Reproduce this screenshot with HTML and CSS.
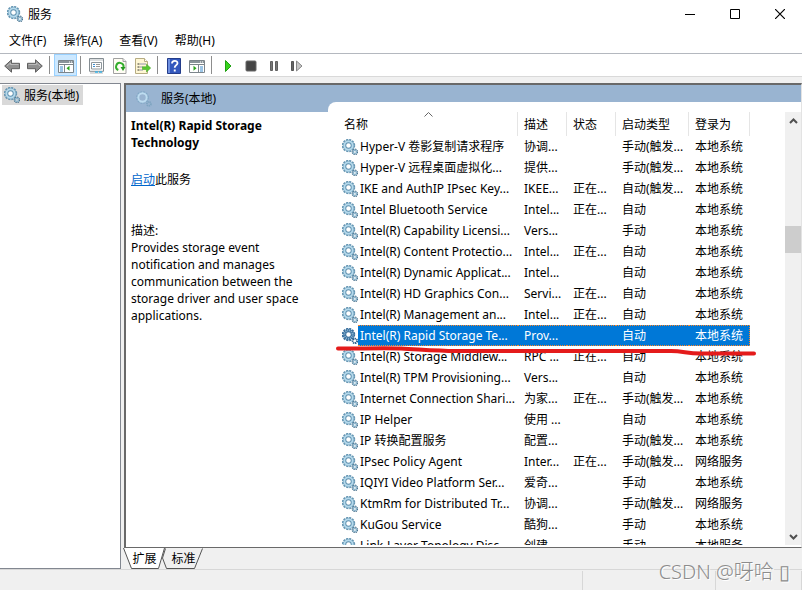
FILE: index.html
```
<!DOCTYPE html>
<html lang="zh-CN">
<head>
    <meta charset="UTF-8">
    <meta name="viewport" content="width=device-width, initial-scale=1.0">
    <title>服务</title>
    <link rel="stylesheet" href="styles.css">
</head>
<body>
    <svg class="defs" width="0" height="0" aria-hidden="true">
        <symbol id="gears" viewBox="0 0 16 16">
            <circle cx="6.5" cy="6.5" r="5.7" fill="none" stroke="#6797b4" stroke-width="2" stroke-dasharray="2 .98"/>
            <circle cx="6.5" cy="6.5" r="4" fill="#fff" stroke="#5f90ae" stroke-width="3.4"/>
            <circle cx="6.5" cy="6.5" r="4.2" fill="none" stroke="#b4d9ec" stroke-width="2"/>
            <circle cx="12.9" cy="12.9" r="2.500" fill="none" stroke="#476f8b" stroke-width="1.6" stroke-dasharray="1.2 .76"/>
            <circle cx="12.9" cy="12.9" r="1.6" fill="none" stroke="#8cb5cc" stroke-width="1.5"/>
        </symbol>
        <symbol id="gears-header" viewBox="0 0 16 16">
            <circle cx="6.500" cy="6.500" r="5.5" fill="none" stroke="#7fa6c4" stroke-width="1.6" stroke-dasharray="1.8 1.080"/>
            <circle cx="6.500" cy="6.500" r="4.2" fill="none" stroke="#bddcf0" stroke-width="2"/>
            <circle cx="12.900" cy="12.900" r="2" fill="none" stroke="#7da4c0" stroke-width="1.8" stroke-dasharray="1.2 .6"/>
        </symbol>
        <symbol id="gears-selected" viewBox="0 0 16 16">
            <circle cx="6.5" cy="6.5" r="5.7" fill="none" stroke="#3a6f9c" stroke-width="2" stroke-dasharray="2 .98"/>
            <circle cx="6.5" cy="6.5" r="4" fill="#fff" stroke="#3a6f9c" stroke-width="3.4"/>
            <circle cx="6.5" cy="6.5" r="4.2" fill="none" stroke="#8bb7d6" stroke-width="2" stroke-dasharray="1 1"/>
            <circle cx="12.9" cy="12.9" r="2.2" fill="none" stroke="#285f8e" stroke-width="2" stroke-dasharray="1.2 .6"/>
        </symbol>
    </svg>

    <div class="window">
        <header class="titlebar">
            <svg class="icon"><use href="#gears"/></svg>
            <h1>服务</h1>
            <div class="window-buttons">
                <button aria-label="最小化"><svg width="10" height="10"><path d="M0 5.5h10" stroke="#000"/></svg></button>
                <button aria-label="最大化"><svg width="10" height="10"><path d="M.5 .5h9v9h-9z" fill="none" stroke="#000"/></svg></button>
                <button aria-label="关闭"><svg width="10" height="10"><path d="M0 0l10 10M10 0L0 10" stroke="#000" stroke-width="1.2"/></svg></button>
            </div>
        </header>

        <nav class="menubar">
            <button>文件(F)</button>
            <button>操作(A)</button>
            <button>查看(V)</button>
            <button>帮助(H)</button>
        </nav>

        <div class="toolbar">
            <button aria-label="后退"><svg class="icon" viewBox="0 0 16 16"><path d="M.7 8L7.5 1.8v3.5h8v5.4h-8v3.5z" fill="#909090" stroke="#5f5f5f"/><path d="M3 8l3.5-3v1.5h8" fill="none" stroke="#bbb"/></svg></button>
            <button aria-label="前进"><svg class="icon" viewBox="0 0 16 16"><path d="M15.3 8L8.5 1.8v3.5h-8v5.4h8v3.5z" fill="#909090" stroke="#5f5f5f"/><path d="M1.5 6.5h8V5L13 8" fill="none" stroke="#bbb"/></svg></button>
            <span class="separator"></span>
            <button class="pressed" aria-label="显示/隐藏控制台树"><svg class="icon" viewBox="0 0 16 16"><path d="M.5 2.5h15v12H.5z" fill="#fff" stroke="#7c858b"/><path d="M1 3h14v2H1z" fill="#8a949a"/><path d="M1 6.5h14M6.5 7v7" stroke="#7c858b"/><path d="M11 4h1M13 4h1" stroke="#fff"/><path d="M2 9h3M2 11h3M2 13h3" stroke="#3d8ed0"/><path d="M11.5 7.8v5l-3-2.5z" fill="#2ba31c"/></svg></button>
            <span class="separator"></span>
            <button aria-label="属性"><svg class="icon" viewBox="0 0 16 16"><path d="M.5 .5h14v12.8H.5z" fill="#fff" stroke="#858d92"/><path d="M1 2h13" stroke="#b7bdc1"/><path d="M2.5 4.5h10v6.5h-10z" fill="#fff" stroke="#8e979c"/><path d="M4 6.5h2M4 8.5h2" stroke="#3d8ed0"/><path d="M7 6.5h4M7 8.5h4" stroke="#999"/><path d="M1 14h13v2H1z" fill="#dcdcdc"/><path d="M6 14h3M10 14h3" stroke="#3ab4e6" stroke-width="1.5"/></svg></button>
            <button aria-label="刷新"><svg class="icon" viewBox="0 0 16 16"><path d="M1.5 .5h9.5l3 3v12H1.5z" fill="#fffdf4" stroke="#a1a1a1"/><path d="M11 .5v3h3" fill="#eee" stroke="#a1a1a1"/><path d="M6.3 12A3.7 3.7 0 1 1 11.4 9.5" fill="none" stroke="#34ad2d" stroke-width="2"/><path d="M8.5 9h5L11 13z" fill="#249b20"/></svg></button>
            <button aria-label="导出列表"><svg class="icon" viewBox="0 0 16 16"><path d="M.5 .5h9l3 3v12H.5z" fill="#fff7d4" stroke="#b6ac83"/><path d="M9.5 .5v3h3" fill="#fff" stroke="#b6ac83"/><path d="M2.5 6h2M2.5 9h2M2.5 12h2" stroke="#333"/><path d="M5 6h6M5 9h3M5 12h3" stroke="#9294b0"/><path d="M7.5 8.8h4V6.2L15.7 10l-4.2 4v-2.5h-4z" fill="#58c930" stroke="#46a52a" stroke-width=".6"/></svg></button>
            <span class="separator"></span>
            <button aria-label="帮助"><svg class="icon" viewBox="0 0 16 16"><path d="M1.5 .5h13v15h-13z" fill="#3358bd" stroke="#233c8a"/><path d="M2 1h2v14H2z" fill="#6e8fe0"/><path d="M6 5.5C6 2 11.5 2 11.5 5.2c0 2-2.8 2-2.8 4.6" fill="none" stroke="#fff" stroke-width="1.8"/><path d="M7.8 11.5h1.9v2H7.8z" fill="#fff"/></svg></button>
            <button aria-label="显示/隐藏操作窗格"><svg class="icon" viewBox="0 0 16 16"><path d="M.5 2.5h15v12H.5z" fill="#fff" stroke="#7c858b"/><path d="M1 3h14v2H1z" fill="#8a949a"/><path d="M1 6.5h14M9.5 7v7" stroke="#7c858b"/><path d="M11 4h1M13 4h1" stroke="#fff"/><path d="M11 9h3M11 11h3M11 13h3" stroke="#3d8ed0"/><path d="M4.5 7.8v5l3-2.5z" fill="#2ba31c"/></svg></button>
            <span class="separator"></span>
            <button aria-label="启动服务"><svg class="icon" viewBox="0 0 16 16"><path d="M5.5 2.5v11l5.5-5.5z" fill="#38d31e" stroke="#20a112"/></svg></button>
            <button aria-label="停止服务"><svg class="icon" viewBox="0 0 16 16"><rect x="3" y="3" width="10" height="10" rx="1" fill="#454545" stroke="#686868"/></svg></button>
            <button aria-label="暂停服务"><svg class="icon" viewBox="0 0 16 16"><path d="M4.5 3.5h2v9h-2zM9.5 3.5h2v9h-2z" fill="#777" stroke="#606060"/></svg></button>
            <button aria-label="重新启动服务"><svg class="icon" viewBox="0 0 16 16"><path d="M2.5 3.5h2v9h-2z" fill="#666" stroke="#555"/><path d="M7.5 3v10l5.5-5z" fill="#c6c6c6" stroke="#888"/></svg></button>
        </div>

        <main class="console">
            <aside class="tree">
                <button class="tree-item"><svg class="icon"><use href="#gears"/></svg>服务(本地)</button>
            </aside>

            <section class="result">
                <div class="extended-view">
                    <div class="view-header"><svg class="icon"><use href="#gears-header"/></svg>服务(本地)</div>
                    <div class="view-body">
                        <div class="details">
                            <h2>Intel(R) Rapid Storage Technology</h2>
                            <p class="action"><a href="#">启动</a>此服务</p>
                            <p>描述:</p>
                            <p>Provides storage event notification and manages communication between the storage driver and user space applications.</p>
                        </div>
                        <div class="list">
                            <div class="list-content">
                                <table>
                                    <colgroup>
                                        <col class="col-name"><col class="col-text"><col class="col-text"><col class="col-startup"><col class="col-logon">
                                    </colgroup>
                                    <thead>
                                        <tr><th>名称<svg class="sort-arrow" width="9" height="5"><path d="M.5 4.5l4-4 4 4" fill="none" stroke="#666"/></svg></th><th>描述</th><th>状态</th><th>启动类型</th><th>登录为</th></tr>
                                    </thead>
                                    <tbody>
                                        <tr><td><svg class="icon"><use href="#gears"/></svg><span>Hyper-V 卷影复制请求程序</span></td><td>协调...</td><td></td><td>手动(触发...</td><td>本地系统</td></tr>
                                        <tr><td><svg class="icon"><use href="#gears"/></svg><span>Hyper-V 远程桌面虚拟化...</span></td><td>提供...</td><td></td><td>手动(触发...</td><td>本地系统</td></tr>
                                        <tr><td><svg class="icon"><use href="#gears"/></svg><span>IKE and AuthIP IPsec Key...</span></td><td>IKEE...</td><td>正在...</td><td>自动(触发...</td><td>本地系统</td></tr>
                                        <tr><td><svg class="icon"><use href="#gears"/></svg><span>Intel Bluetooth Service</span></td><td>Intel...</td><td>正在...</td><td>自动</td><td>本地系统</td></tr>
                                        <tr><td><svg class="icon"><use href="#gears"/></svg><span>Intel(R) Capability Licensi...</span></td><td>Vers...</td><td></td><td>手动</td><td>本地系统</td></tr>
                                        <tr><td><svg class="icon"><use href="#gears"/></svg><span>Intel(R) Content Protectio...</span></td><td>Intel...</td><td>正在...</td><td>自动</td><td>本地系统</td></tr>
                                        <tr><td><svg class="icon"><use href="#gears"/></svg><span>Intel(R) Dynamic Applicat...</span></td><td>Intel...</td><td></td><td>自动</td><td>本地系统</td></tr>
                                        <tr><td><svg class="icon"><use href="#gears"/></svg><span>Intel(R) HD Graphics Con...</span></td><td>Servi...</td><td>正在...</td><td>自动</td><td>本地系统</td></tr>
                                        <tr><td><svg class="icon"><use href="#gears"/></svg><span>Intel(R) Management an...</span></td><td>Intel...</td><td>正在...</td><td>自动</td><td>本地系统</td></tr>
                                        <tr class="selected"><td><svg class="icon"><use href="#gears-selected"/></svg><span>Intel(R) Rapid Storage Te...</span></td><td>Prov...</td><td></td><td>自动</td><td>本地系统</td></tr>
                                        <tr><td><svg class="icon"><use href="#gears"/></svg><span>Intel(R) Storage Middlew...</span></td><td>RPC ...</td><td>正在...</td><td>自动</td><td>本地系统</td></tr>
                                        <tr><td><svg class="icon"><use href="#gears"/></svg><span>Intel(R) TPM Provisioning...</span></td><td>Vers...</td><td></td><td>自动</td><td>本地系统</td></tr>
                                        <tr><td><svg class="icon"><use href="#gears"/></svg><span>Internet Connection Shari...</span></td><td>为家...</td><td>正在...</td><td>手动(触发...</td><td>本地系统</td></tr>
                                        <tr><td><svg class="icon"><use href="#gears"/></svg><span>IP Helper</span></td><td>使用 ...</td><td></td><td>自动</td><td>本地系统</td></tr>
                                        <tr><td><svg class="icon"><use href="#gears"/></svg><span>IP 转换配置服务</span></td><td>配置...</td><td></td><td>手动(触发...</td><td>本地系统</td></tr>
                                        <tr><td><svg class="icon"><use href="#gears"/></svg><span>IPsec Policy Agent</span></td><td>Inter...</td><td>正在...</td><td>手动(触发...</td><td>网络服务</td></tr>
                                        <tr><td><svg class="icon"><use href="#gears"/></svg><span>IQIYI Video Platform Ser...</span></td><td>爱奇...</td><td></td><td>手动</td><td>本地系统</td></tr>
                                        <tr><td><svg class="icon"><use href="#gears"/></svg><span>KtmRm for Distributed Tr...</span></td><td>协调...</td><td></td><td>手动(触发...</td><td>网络服务</td></tr>
                                        <tr><td><svg class="icon"><use href="#gears"/></svg><span>KuGou Service</span></td><td>酷狗...</td><td></td><td>手动</td><td>本地系统</td></tr>
                                        <tr><td><svg class="icon"><use href="#gears"/></svg><span>Link-Layer Topology Disc...</span></td><td>创建...</td><td></td><td>手动</td><td>本地服务</td></tr>
                                    </tbody>
                                </table>
                                <svg class="underline" width="422" height="12" viewBox="0 0 422 12"><path d="M2 3.5C20 4 45 2.5 65 3.5S100 6 120 6H335C348 6 350 8.5 365 8.5H418" fill="none" stroke="#e41b1b" stroke-width="4" stroke-linecap="round"/></svg>
                            </div>
                            <div class="scrollbar">
                                <button aria-label="向上滚动"><svg width="9" height="6"><path d="M1 5l3.5-3.5L8 5" fill="none" stroke="#505050" stroke-width="2"/></svg></button>
                                <div class="track"><div class="thumb"></div></div>
                                <button aria-label="向下滚动"><svg width="9" height="6"><path d="M1 1l3.5 3.5L8 1" fill="none" stroke="#505050" stroke-width="2"/></svg></button>
                            </div>
                        </div>
                    </div>
                </div>
                <div class="tabs">
                    <button class="tab active"><svg width="42" height="21"><path d="M.5 0l8 20.5h27l6-20.5" fill="#fff" stroke="#555"/></svg><span>扩展</span></button>
                    <button class="tab"><svg width="42" height="21"><path d="M3.5 .5L.5 10l4 10.5h28L40.5 .5" fill="#f0f0f0" stroke="#555"/></svg><span>标准</span></button>
                </div>
            </section>
        </main>

        <footer class="statusbar"><span></span><span></span><span></span></footer>
        <div class="watermark">CSDN @呀哈 ▯</div>
    </div>
</body>
</html>
```
FILE: styles.css
```
* {
    box-sizing: border-box;
}
body {
    margin: 0;
    font-family: "Noto Sans", "Noto Sans CJK SC", sans-serif;
    font-size: 12px;
    line-height: 17px;
    color: #000;
    background: #f0f0f0;
}
button {
    display: flex;
    align-items: center;
    justify-content: center;
    margin: 0;
    padding: 0;
    border: none;
    background: none;
    color: inherit;
    font: inherit;
}
h1, h2, p {
    margin: 0;
    font-size: 12px;
}
h1 {
    font-weight: normal;
}
.defs {
    display: none;
}
.icon {
    width: 16px;
    height: 16px;
    flex: none;
}
.window {
    position: relative;
    display: flex;
    flex-direction: column;
    height: 100vh;
    overflow: hidden;
}

/* Title and menus */
.titlebar {
    display: flex;
    align-items: center;
    gap: 5px;
    height: 28px;
    padding-left: 7px;
    background: #fff;
}
.window-buttons {
    display: flex;
    margin-left: auto;
}
.window-buttons button {
    width: 45px;
    height: 28px;
}
.menubar {
    display: flex;
    gap: 17px;
    height: 26px;
    padding-left: 9px;
    background: #fff;
    border-bottom: 1px solid #b4b8bf;
}
.toolbar {
    display: flex;
    align-items: center;
    height: 23px;
    background: #fff;
    border-bottom: 1px solid #d9d9d9;
}
.toolbar button {
    width: 23px;
    height: 22px;
}
.toolbar .icon {
    margin-top: 1px;
}
.toolbar .pressed {
    background: #cce8ff;
    border: 1px solid #99d1ff;
}
.separator {
    width: 1px;
    height: 18px;
    margin: 0 4px 0 3px;
    background: #8d8d8d;
}

/* Tree and result panes */
.console {
    display: flex;
    flex: 1;
    gap: 3px;
    min-height: 0;
    padding-top: 6px;
}
.tree {
    width: 121px;
    padding: 1px 2px;
    background: #fff;
    border: 1px solid #828790;
    border-left: none;
}
.tree-item {
    gap: 4px;
    height: 20px;
    padding: 0 4px 0 2px;
    background: #d9d9d9;
}
.result {
    display: flex;
    flex: 1;
    flex-direction: column;
    min-width: 0;
}
.extended-view {
    display: flex;
    flex: 1;
    flex-direction: column;
    min-height: 0;
    border: 1px solid #696969;
    border-top-width: 2px;
    border-left-width: 2px;
    border-right-color: #e3e3e3;
    background: #fff;
}
.view-header {
    display: flex;
    align-items: center;
    gap: 9px;
    height: 27px;
    padding-left: 10px;
    background: #99b4d1;
}
.view-body {
    display: flex;
    flex: 1;
    min-height: 0;
}
.details {
    width: 202px;
    padding: 5px 15px 0 5px;
}
.details .action {
    margin: 20px 0 34px;
}
.details a {
    color: #0066cc;
}
.list {
    display: flex;
    flex: 1;
    min-width: 0;
    margin-top: -10px;
    padding: 10px 0 2px 8px;
    border-radius: 8px 0 0 0;
    background: #fff;
}
.list-content {
    position: relative;
    flex: 1;
    padding-left: 2px;
    overflow: hidden;
}
table {
    width: 412px;
    table-layout: fixed;
    border-collapse: separate;
    border-spacing: 0;
}
.col-name {
    width: 180px;
}
.col-text {
    width: 49px;
}
.col-startup {
    width: 73px;
}
.col-logon {
    width: 61px;
}
th {
    position: relative;
    height: 24px;
    padding: 0 0 0 6px;
    font-weight: normal;
    text-align: left;
    border-right: 1px solid #e5e5e5;
}
.sort-arrow {
    position: absolute;
    top: 0;
    left: calc(50% - 4px);
}
td {
    height: 21px;
    padding: 0 0 0 6px;
    white-space: nowrap;
}
td:first-child {
    display: flex;
    align-items: center;
    padding-left: 4px;
}
td:first-child span {
    flex: 1;
    padding-left: 2px;
    line-height: 21px;
}
.selected td {
    color: #fff;
    background: #0078d7;
}
.selected td:first-child {
    background: none;
}
.selected td:first-child span {
    background: #0078d7;
}
.selected td + td,
.selected td:first-child span {
    border-top: 1px dotted #ff8728;
    border-bottom: 1px dotted #ff8728;
    line-height: 19px;
}
.selected td:last-child {
    border-right: 1px dotted #ff8728;
}
.underline {
    position: absolute;
    top: 233px;
    left: 0;
}

/* Scroll bar */
.scrollbar {
    display: flex;
    flex-direction: column;
    width: 16px;
    background: #f0f0f0;
}
.scrollbar button {
    height: 17px;
}
.track {
    flex: 1;
    padding-top: 97px;
}
.thumb {
    height: 27px;
    background: #cdcdcd;
}

/* View tabs and status bar */
.tabs {
    display: flex;
    height: 21px;
}
.tab {
    display: grid;
    width: 39px;
}
.tab svg,
.tab span {
    grid-area: 1 / 1;
}
.tab span {
    padding-left: 2px;
}
.tab svg {
    overflow: visible;
}
.tab.active {
    z-index: 1;
}
.statusbar {
    display: flex;
    height: 21px;
    border-top: 1px solid #d7d7d7;
}
.statusbar span {
    width: 133px;
    margin-top: 1px;
    border-right: 1px solid #d7d7d7;
}
.statusbar span:first-child {
    flex: 1;
}
.statusbar span:last-child {
    width: 86px;
}
.watermark {
    position: absolute;
    right: 12px;
    bottom: 5px;
    font-size: 20px;
    font-weight: 300;
    line-height: 26px;
    color: #8c8c8c;
    text-shadow: 1px 1px 0 #fff;
}
```
